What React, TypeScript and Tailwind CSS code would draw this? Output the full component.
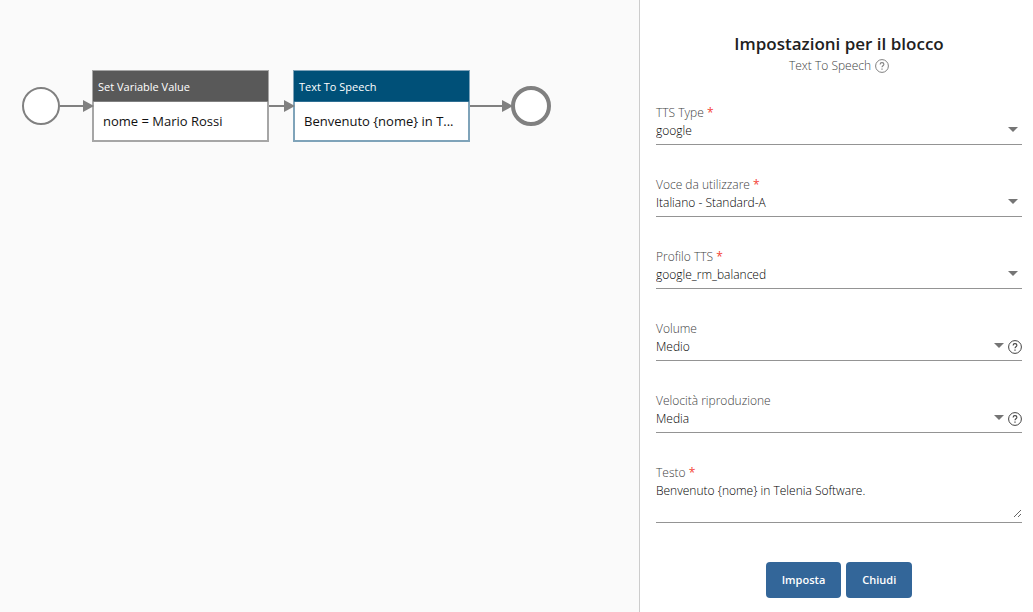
import { useState } from "react";

interface Field {
  id: string;
  label: string;
  required?: boolean;
  help?: boolean;
  options: string[];
}

const fields: Field[] = [
  { id: "type", label: "TTS Type", required: true, options: ["google"] },
  {
    id: "voice",
    label: "Voce da utilizzare",
    required: true,
    options: ["Italiano - Standard-A"],
  },
  {
    id: "profile",
    label: "Profilo TTS",
    required: true,
    options: ["google_rm_balanced"],
  },
  { id: "volume", label: "Volume", help: true, options: ["Medio"] },
  { id: "speed", label: "Velocità riproduzione", help: true, options: ["Media"] },
];

// blocks on the canvas only have room for the start of the text
const preview = (text: string) =>
  text.length > 24 ? `${text.slice(0, 21)}...` : text;

function HelpIcon({ className }: { className: string }) {
  return (
    <svg
      viewBox="0 0 14 14"
      className={`size-3.5 shrink-0 ${className}`}
      fill="none"
      stroke="currentColor"
      aria-hidden="true"
    >
      <circle cx="7" cy="7" r="6.4" strokeWidth="1" />
      <path d="M5.1 5.5c0-1.2.8-1.9 1.9-1.9s1.9.7 1.9 1.7c0 1.5-1.9 1.5-1.9 3" strokeWidth="1.1" />
      <path d="M7 9.5v1.2" strokeWidth="1.2" />
    </svg>
  );
}

// connector between two blocks, the head overlaps the border of the next one
function Arrow({ className }: { className: string }) {
  return (
    <div className={`z-10 -mr-0.5 flex shrink-0 items-center ${className}`}>
      <div className="h-0.5 flex-1 bg-[#808080]" />
      <svg viewBox="0 0 11 12" className="h-3 w-[11px] shrink-0" fill="#808080">
        <path d="M0 0L11 6L0 12Z" />
      </svg>
    </div>
  );
}

function Block({
  title,
  text,
  border,
  header,
}: {
  title: string;
  text: string;
  border: string;
  header: string;
}) {
  return (
    <div className={`w-[177px] shrink-0 border-2 border-t bg-white ${border}`}>
      <div
        className={`-mx-px h-[31px] border-b px-[5px] text-[11px] leading-[32px] font-medium text-white ${header}`}
      >
        {title}
      </div>
      <div className="h-[38px] px-[9px] text-[13px] leading-[38px] whitespace-nowrap text-[#111111]">
        {preview(text)}
      </div>
    </div>
  );
}

function Required() {
  return <span className="font-normal text-[#f44336]"> *</span>;
}

export default function App() {
  const [text, setText] = useState("Benvenuto {nome} in Telenia Software.");

  return (
    <div className="flex min-h-screen bg-[#fafafa] font-['Open_Sans','Noto_Sans',sans-serif]">
      {/* Flow canvas */}
      <main className="flex min-w-0 flex-1 items-start overflow-hidden pt-[70px] pl-[22px]">
        <div className="flex items-center">
          <div className="size-[38px] shrink-0 rounded-full border-2 border-[#808080] bg-white" />
          <Arrow className="w-[34px]" />
          <Block
            title="Set Variable Value"
            text="nome = Mario Rossi"
            border="border-[#a6a6a6]"
            header="border-[#808080] bg-[#595959]"
          />
          <Arrow className="w-[26px]" />
          <Block
            title="Text To Speech"
            text={text}
            border="border-[#7fa3b9]"
            header="border-[#2f6f93] bg-[#005078]"
          />
          <Arrow className="w-[43px]" />
          <div className="size-10 shrink-0 rounded-full border-4 border-[#808080] bg-white" />
        </div>
      </main>

      {/* Settings panel */}
      <aside className="w-[394px] shrink-0 border-l border-[#cccccc] bg-white pt-8 pr-[11px] pl-4">
        <h1 className="text-center text-[17px] leading-6 font-semibold text-[#212121]">
          Impostazioni per il blocco
        </h1>
        <div className="flex items-center justify-center gap-1 text-[12px] leading-5 font-light text-[#424242]">
          Text To Speech
          <HelpIcon className="text-[#808080]" />
        </div>

        <form
          className="mt-7 flex flex-col gap-[31px] text-[12px] leading-[18px] font-light"
          onSubmit={(e) => e.preventDefault()}
        >
          {fields.map((field) => (
            <div key={field.id} className="border-b border-[#949494] pb-1">
              <label htmlFor={field.id} className="block text-[#424242]">
                {field.label}
                {field.required && <Required />}
              </label>
              <div className="flex items-center">
                <div className="relative flex-1">
                  <select
                    id={field.id}
                    className="block h-[18px] w-full appearance-none bg-transparent text-black outline-none"
                  >
                    {field.options.map((option) => (
                      <option key={option}>{option}</option>
                    ))}
                  </select>
                  <svg
                    viewBox="0 0 10 5"
                    className="pointer-events-none absolute top-[5px] right-1 h-[5px] w-2.5"
                    fill="#757575"
                  >
                    <path d="M0 0H10L5 5Z" />
                  </svg>
                </div>
                {field.help && <HelpIcon className="text-[#424242]" />}
              </div>
            </div>
          ))}

          <div className="border-b border-[#949494]">
            <label htmlFor="text" className="block text-[#424242]">
              Testo
              <Required />
            </label>
            <textarea
              id="text"
              value={text}
              onChange={(e) => setText(e.target.value)}
              className="mb-1 block h-9 w-full resize-y bg-transparent text-black outline-none"
            />
          </div>

          <div className="mt-2 flex justify-center gap-[5px] pb-3.5 text-[11px] font-semibold text-white">
            <button type="submit" className="h-9 rounded bg-[#336699] px-4">
              Imposta
            </button>
            <button type="button" className="h-9 rounded bg-[#336699] px-4">
              Chiudi
            </button>
          </div>
        </form>
      </aside>
    </div>
  );
}
